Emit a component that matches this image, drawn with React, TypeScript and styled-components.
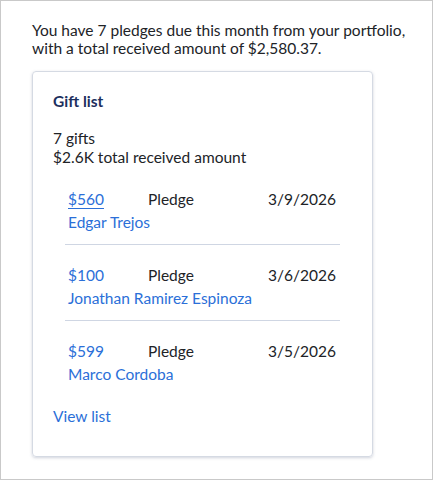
import { createGlobalStyle } from 'styled-components';
import styled from 'styled-components';

const GlobalStyle = createGlobalStyle`
  html, body {
    margin: 0;
    padding: 0;
    background: #ffffff;
  }
  body {
    font-family: Lato, 'Liberation Sans', sans-serif;
    color: #212327;
  }
`;

interface Gift {
  amount: string;
  type: string;
  date: string;
  donor: string;
  focused?: boolean;
}

const gifts: Gift[] = [
  { amount: '$560', type: 'Pledge', date: '3/9/2026', donor: 'Edgar Trejos', focused: true },
  { amount: '$100', type: 'Pledge', date: '3/6/2026', donor: 'Jonathan Ramirez Espinoza' },
  { amount: '$599', type: 'Pledge', date: '3/5/2026', donor: 'Marco Cordoba' },
];

export default function App() {
  return (
    <>
      <GlobalStyle />
      <Frame>
        <Summary>
          You have 7 pledges due this month from your portfolio, with a total received amount of
          $2,580.37.
        </Summary>
        <Card>
          <CardTitle>Gift list</CardTitle>
          <Stats>
            <div>7 gifts</div>
            <div>$2.6K total received amount</div>
          </Stats>
          <GiftList>
            {gifts.map((g) => (
              <GiftRow key={g.donor}>
                <GiftLine>
                  <Link $underline={g.focused}>{g.amount}</Link>
                  <span>{g.type}</span>
                  <span>{g.date}</span>
                </GiftLine>
                <Link>{g.donor}</Link>
              </GiftRow>
            ))}
          </GiftList>
          <ViewList>View list</ViewList>
        </Card>
      </Frame>
    </>
  );
}

const Frame = styled.div`
  box-sizing: border-box;
  width: 433px;
  height: 480px;
  border: 1px solid #c9c9c9;
  padding: 20px 18px 0 31px;
`;

const Summary = styled.p`
  margin: 0 0 14px;
  font-size: 15.5px;
  line-height: 18px;
  color: #212327;
`;

const Card = styled.div`
  box-sizing: border-box;
  width: 341px;
  border: 1px solid #d5dae3;
  border-radius: 4px;
  box-shadow: 0 1px 3px rgba(100, 110, 140, 0.3);
  padding: 19px 20px 30px;
`;

const CardTitle = styled.h2`
  margin: 0 0 18px;
  font-size: 15.5px;
  line-height: 20px;
  font-weight: 700;
  color: #1d2f5e;
`;

const Stats = styled.div`
  font-size: 15.5px;
  line-height: 19px;
  color: #212327;
`;

const GiftList = styled.div`
  margin: 22px 0 0;
  padding: 0 12px;
`;

const GiftRow = styled.div`
  display: flex;
  flex-direction: column;
  gap: 3px;
  padding: 0 3px 12px;
  font-size: 15.5px;
  line-height: 20px;
  & + & {
    border-top: 1px solid #cfd6e3;
    padding-top: 20px;
  }
`;

const GiftLine = styled.div`
  display: grid;
  grid-template-columns: 80px 120px auto;
  color: #212327;
`;

const Link = styled.a<{ $underline?: boolean }>`
  color: #2b6fd8;
  text-decoration: ${(p) => (p.$underline ? 'underline' : 'none')};
  text-underline-offset: 3px;
  cursor: pointer;
`;

const ViewList = styled(Link)`
  display: block;
  margin-top: 10px;
  font-size: 15.5px;
  line-height: 20px;
`;
